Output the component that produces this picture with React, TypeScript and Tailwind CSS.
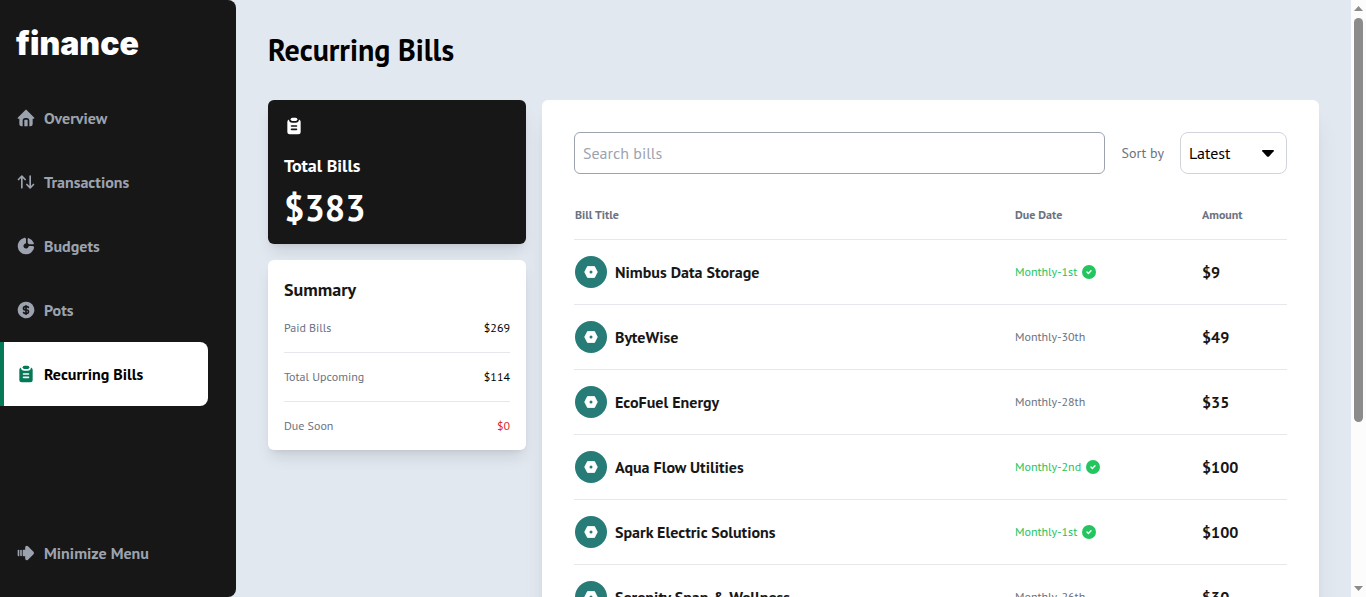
import { useState } from "react";
import type { ReactNode } from "react";
import {
  TbHomeFilled,
  TbArrowsSort,
  TbChartDonutFilled,
  TbCoinFilled,
  TbArrowBigRightLinesFilled,
} from "react-icons/tb";

type Bill = { title: string; due: string; amount: number; paid: boolean };

const bills: Bill[] = [
  { title: "Nimbus Data Storage", due: "Monthly-1st", amount: 9, paid: true },
  { title: "ByteWise", due: "Monthly-30th", amount: 49, paid: false },
  { title: "EcoFuel Energy", due: "Monthly-28th", amount: 35, paid: false },
  { title: "Aqua Flow Utilities", due: "Monthly-2nd", amount: 100, paid: true },
  { title: "Spark Electric Solutions", due: "Monthly-1st", amount: 100, paid: true },
  { title: "Serenity Span & Wellness", due: "Monthly-26th", amount: 30, paid: false },
  { title: "Elevate Education", due: "Monthly-4th", amount: 50, paid: true },
  { title: "Pixel Playground", due: "Monthly-11th", amount: 10, paid: true },
];

function ClipboardIcon() {
  return (
    <svg viewBox="0 0 24 24" className="size-5" fill="currentColor" aria-hidden="true">
      <path
        fillRule="evenodd"
        d="M17.997 4.17A3 3 0 0 1 20 7v12a3 3 0 0 1-3 3H7a3 3 0 0 1-3-3V7a3 3 0 0 1 2.003-2.83A4 4 0 0 0 10 8h4a4 4 0 0 0 3.98-3.597zM15 15H9a1 1 0 0 0 0 2h6a1 1 0 0 0 0-2m0-4H9a1 1 0 0 0 0 2h6a1 1 0 0 0 0-2"
      />
      <path d="M14 2a2 2 0 1 1 0 4h-4a2 2 0 1 1 0-4z" />
    </svg>
  );
}

function PaidIcon() {
  return (
    <svg viewBox="0 0 16 16" className="size-4" aria-hidden="true">
      <circle cx="8" cy="8" r="7" fill="#22c55e" />
      <path
        d="M6 8.1l1.4 1.3L10 6.8"
        fill="none"
        stroke="#fff"
        strokeWidth="1.4"
        strokeLinecap="round"
        strokeLinejoin="round"
      />
    </svg>
  );
}

function NavItem({ icon, label, active = false }: { icon: ReactNode; label: string; active?: boolean }) {
  return (
    <a
      href="#"
      className={
        active
          ? "flex h-16 items-center gap-2 rounded-r-lg border-l-4 border-[#047857] bg-white pl-3 text-black"
          : "flex h-16 items-center gap-2 pl-4 text-[#9ca3af]"
      }
    >
      <span className={active ? "text-xl text-[#047857]" : "text-xl"}>{icon}</span>
      <span className="font-semibold">{label}</span>
    </a>
  );
}

function Sidebar() {
  return (
    <aside className="flex w-[236px] shrink-0 flex-col rounded-r-lg bg-neutral-900 pr-7 pb-3">
      <div className="flex h-[86px] items-center pt-0.5 pl-4 font-['Inter',sans-serif] text-[32px] font-black text-white">
        finance
      </div>
      <nav className="flex flex-1 flex-col">
        <NavItem icon={<TbHomeFilled />} label="Overview" />
        <NavItem icon={<TbArrowsSort />} label="Transactions" />
        <NavItem icon={<TbChartDonutFilled />} label="Budgets" />
        <NavItem icon={<TbCoinFilled />} label="Pots" />
        <NavItem icon={<ClipboardIcon />} label="Recurring Bills" active />
      </nav>
      <button type="button" className="flex h-16 items-center gap-2 pl-4 text-[#9ca3af]">
        <TbArrowBigRightLinesFilled className="text-xl" />
        <span className="font-semibold">Minimize Menu</span>
      </button>
    </aside>
  );
}

function SummaryRow({ label, value, tone }: { label: string; value: string; tone: string }) {
  return (
    <div className="box-content flex h-12 items-center justify-between text-xs">
      <dt className="text-[#6b7280]">{label}</dt>
      <dd className={tone}>{value}</dd>
    </div>
  );
}

function BillLogo() {
  return (
    <svg viewBox="0 0 32 32" className="size-8 shrink-0" aria-hidden="true">
      <circle cx="16" cy="16" r="16" fill="#277c78" />
      <path
        d="M12.5 10.5h7l2.8 5.5-2.8 5.5h-7L9.7 16z"
        fill="#fff"
        stroke="#fff"
        strokeWidth="0.8"
        strokeLinejoin="round"
      />
      <circle cx="16" cy="16" r="1.5" fill="#277c78" />
    </svg>
  );
}

function BillsPanel() {
  const [query, setQuery] = useState("");
  const visible = bills.filter((b) => b.title.toLowerCase().includes(query.toLowerCase()));
  return (
    <section className="rounded-md bg-white p-8 shadow-xl">
      <div className="flex items-center gap-4">
        <input
          type="search"
          aria-label="Search bills"
          placeholder="Search bills"
          value={query}
          onChange={(e) => setQuery(e.target.value)}
          className="h-[42px] min-w-0 flex-1 rounded-md border border-[#9ca3af] px-2 text-base placeholder:text-[#9ca3af]"
        />
        <label htmlFor="sort" className="text-sm text-[#6b7280]">
          Sort by
        </label>
        <div className="relative w-[107px]">
          <select
            id="sort"
            className="h-[42px] w-full appearance-none rounded-lg border border-[#d1d5db] bg-white px-2 text-base text-black"
          >
            <option>Latest</option>
            <option>Oldest</option>
            <option>A to Z</option>
            <option>Z to A</option>
            <option>Highest</option>
            <option>Lowest</option>
          </select>
          <svg
            viewBox="0 0 12 7"
            className="pointer-events-none absolute top-[18px] right-[13px] h-[7px] w-3"
            aria-hidden="true"
          >
            <path d="M.8 0h10.4q1.2.2.5 1.2L7 6.4q-1 .9-2 0L.3 1.2Q-.4.2.8 0z" />
          </svg>
        </div>
      </div>
      <table className="mt-4 w-full table-fixed border-separate border-spacing-0 text-left">
        <thead>
          <tr className="h-[50px] text-xs text-[#6b7280] *:border-b *:border-[#e5e7eb]">
            <th className="pl-px font-semibold">Bill Title</th>
            <th className="w-[187px] pl-px font-semibold">Due Date</th>
            <th className="w-[86px] pl-px font-semibold">Amount</th>
          </tr>
        </thead>
        <tbody>
          {visible.map((bill) => (
            <tr key={bill.title} className="h-[65px] *:border-b *:border-[#e5e7eb] last:*:border-b-0">
              <td className="pl-px">
                <div className="flex items-center gap-2">
                  <BillLogo />
                  <span className="font-semibold text-neutral-900">{bill.title}</span>
                </div>
              </td>
              <td className="pl-px">
                <div
                  className={
                    bill.paid
                      ? "flex items-center gap-1 text-xs text-[#22c55e]"
                      : "flex items-center gap-1 text-xs text-[#6b7280]"
                  }
                >
                  {bill.due}
                  {bill.paid && <PaidIcon />}
                </div>
              </td>
              <td className="pl-px font-semibold text-neutral-900">${bill.amount}</td>
            </tr>
          ))}
        </tbody>
      </table>
    </section>
  );
}

function ScrollRail() {
  return (
    <div className="flex w-[15px] shrink-0 flex-col items-center justify-between bg-[#fcfcfc] py-1.5" aria-hidden="true">
      <svg viewBox="0 0 9 5" className="h-[5px] w-[9px]" fill="#8b8b8b">
        <path d="M4.5 0L9 5H0z" />
      </svg>
      <div className="my-[7px] w-[9px] flex-1">
        <div className="h-[72%] rounded-full bg-[#8b8b8b]" />
      </div>
      <svg viewBox="0 0 9 5" className="h-[5px] w-[9px]" fill="#8b8b8b">
        <path d="M0 0h9L4.5 5z" />
      </svg>
    </div>
  );
}

export default function App() {
  return (
    <div className="flex h-screen bg-slate-200 font-['PT_Sans','Open_Sans','Noto_Sans',sans-serif]">
      <Sidebar />
      <main className="min-w-0 flex-1 overflow-y-auto px-8 pb-10 [scrollbar-width:none]">
        <h1 className="flex h-[100px] items-center text-3xl font-semibold text-black">Recurring Bills</h1>
        <div className="grid grid-cols-[258px_1fr] items-start gap-4">
          <div className="flex flex-col gap-4">
            <section className="rounded-md bg-neutral-900 p-4 text-white shadow-lg">
              <ClipboardIcon />
              <h2 className="mt-4 text-lg leading-7 font-semibold">Total Bills</h2>
              <p className="mt-2 text-4xl leading-10 font-semibold">$383</p>
            </section>
            <section className="rounded-md bg-white px-4 pt-4 shadow-lg">
              <h2 className="text-lg leading-7 font-semibold text-neutral-900">Summary</h2>
              <dl className="divide-y divide-[#e5e7eb]">
                <SummaryRow label="Paid Bills" value="$269" tone="text-black" />
                <SummaryRow label="Total Upcoming" value="$114" tone="text-black" />
                <SummaryRow label="Due Soon" value="$0" tone="text-[#dc2626]" />
              </dl>
            </section>
          </div>
          <BillsPanel />
        </div>
      </main>
      <ScrollRail />
    </div>
  );
}
